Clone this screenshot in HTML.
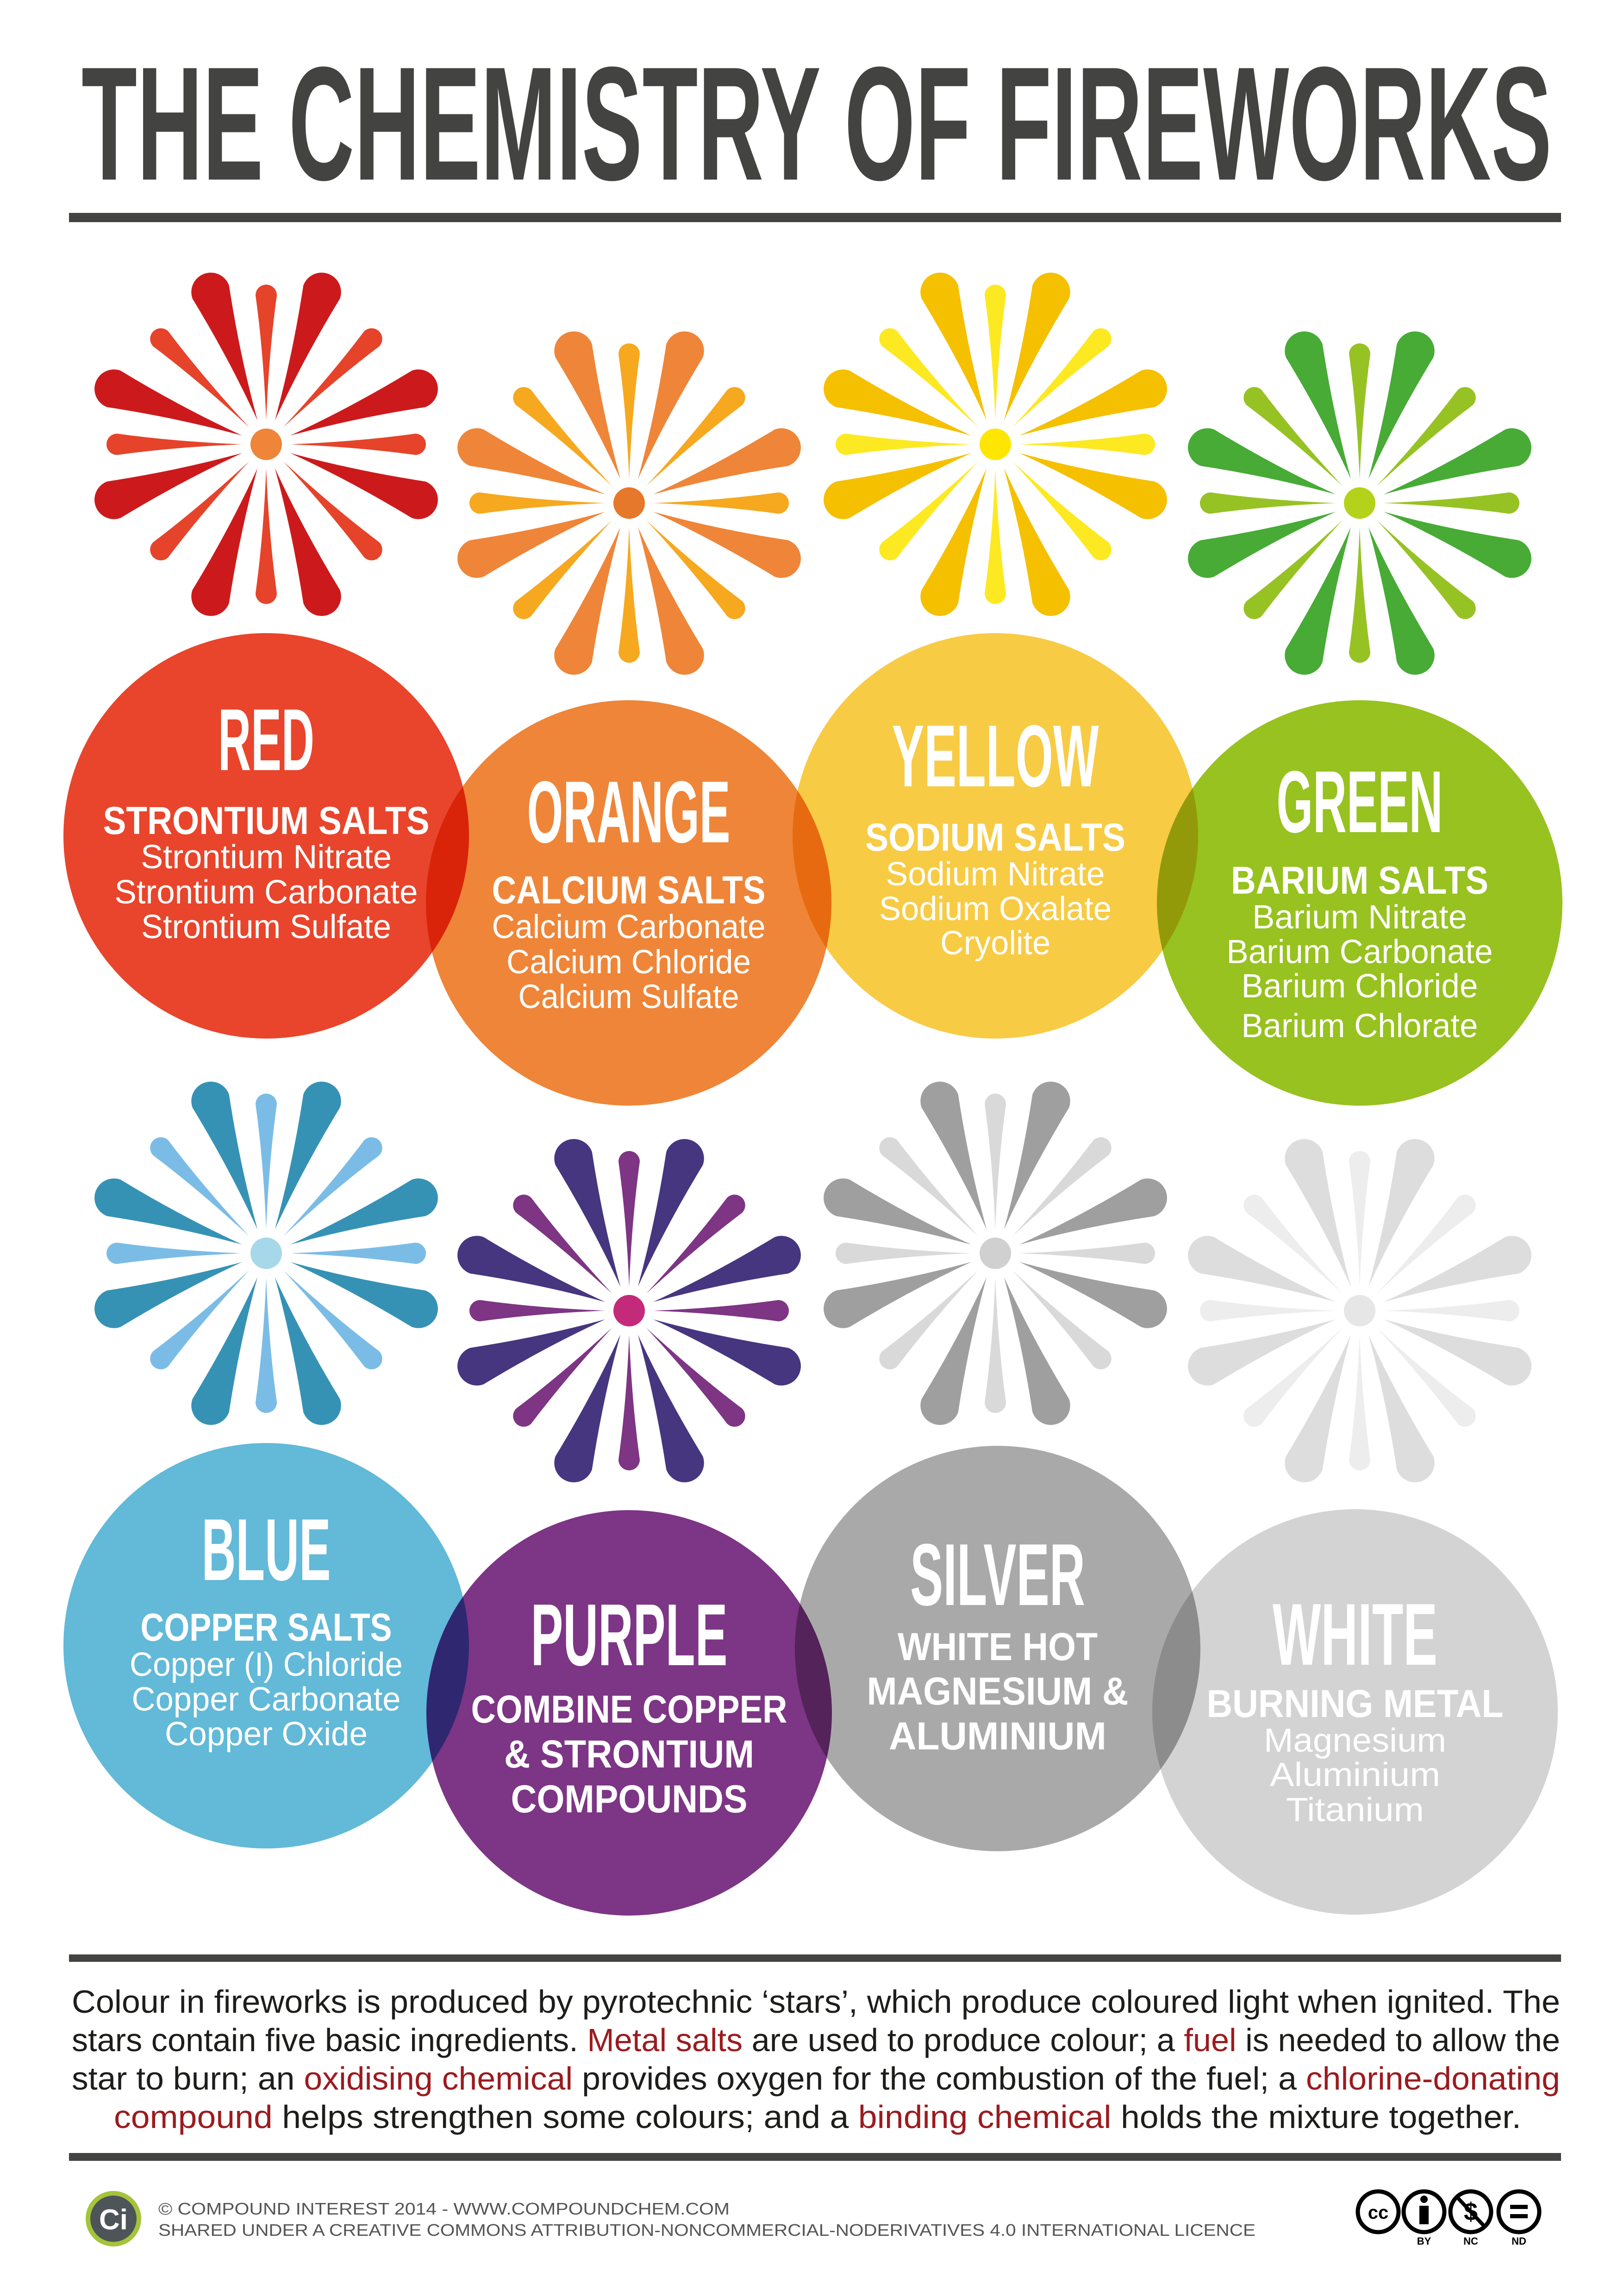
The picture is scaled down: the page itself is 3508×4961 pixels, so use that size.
<!DOCTYPE html>
<html><head><meta charset="utf-8"><style>
html,body{margin:0;padding:0;background:#fff}
svg{display:block}
.h{font-family:"Liberation Sans Narrow","Liberation Sans",sans-serif;font-weight:bold;fill:#fff}
.b{font-family:"Liberation Sans",sans-serif;font-weight:bold;fill:#fff}
.l{font-family:"Liberation Sans Narrow","Liberation Sans",sans-serif;fill:#fff}
</style></head><body>
<svg width="3508" height="4961" viewBox="0 0 3508 4961" xmlns="http://www.w3.org/2000/svg">
<defs>
<path id="d" d="M0,-55 Q-12,-200 -42,-350 A42,42 0 0 1 42,-350 Q12,-200 0,-55Z"/>
<path id="s" d="M0,-52 Q-6,-200 -23,-322 A23,23 0 0 1 23,-322 Q6,-200 0,-52Z"/>
<g id="D"><use href="#d" transform="rotate(20)"/><use href="#d" transform="rotate(-20)"/><use href="#d" transform="rotate(70)"/><use href="#d" transform="rotate(-70)"/><use href="#d" transform="rotate(110)"/><use href="#d" transform="rotate(-110)"/><use href="#d" transform="rotate(160)"/><use href="#d" transform="rotate(-160)"/></g>
<g id="S"><use href="#s"/><use href="#s" transform="rotate(45)"/><use href="#s" transform="rotate(90)"/><use href="#s" transform="rotate(135)"/><use href="#s" transform="rotate(180)"/><use href="#s" transform="rotate(225)"/><use href="#s" transform="rotate(270)"/><use href="#s" transform="rotate(315)"/></g>
</defs>

<text x="176" y="388" textLength="3176" lengthAdjust="spacingAndGlyphs" font-family="Liberation Sans Narrow, Liberation Sans, sans-serif" font-weight="bold" font-size="350" fill="#434341">THE CHEMISTRY OF FIREWORKS</text>
<rect x="149" y="460" width="3223" height="20" fill="#434341"/>

<!-- bursts -->
<g transform="translate(575,960)"><use href="#D" fill="#cc1a1c"/><use href="#S" fill="#e6432b"/><circle r="34" fill="#ef8538"/></g>
<g transform="translate(1359,1087)"><use href="#D" fill="#ef8538"/><use href="#S" fill="#f6a81e"/><circle r="34" fill="#e6782b"/></g>
<g transform="translate(2150,960)"><use href="#D" fill="#f5c000"/><use href="#S" fill="#fce921"/><circle r="34" fill="#ffe600"/></g>
<g transform="translate(2937,1087)"><use href="#D" fill="#47ab36"/><use href="#S" fill="#97c224"/><circle r="34" fill="#b5d21a"/></g>
<g transform="translate(575,2708)"><use href="#D" fill="#3692b5"/><use href="#S" fill="#7bbce6"/><circle r="34" fill="#a6d8ea"/></g>
<g transform="translate(1359,2832)"><use href="#D" fill="#46357f"/><use href="#S" fill="#7d3584"/><circle r="34" fill="#c42a7a"/></g>
<g transform="translate(2150,2708)"><use href="#D" fill="#a09fa0"/><use href="#S" fill="#d9d9d9"/><circle r="34" fill="#d0d0d0"/></g>
<g transform="translate(2937,2832)"><use href="#D" fill="#dddddd"/><use href="#S" fill="#ededed"/><circle r="34" fill="#e6e6e6"/></g>

<!-- circles -->
<g style="isolation:isolate">
<circle cx="575" cy="1806" r="438" fill="#e8452c" style="mix-blend-mode:multiply"/>
<circle cx="1358" cy="1951" r="438" fill="#ef8538" style="mix-blend-mode:multiply"/>
<circle cx="2150" cy="1806" r="438" fill="#f8cb45" style="mix-blend-mode:multiply"/>
<circle cx="2937" cy="1951" r="438" fill="#97c21f" style="mix-blend-mode:multiply"/>
<circle cx="575" cy="3556" r="438" fill="#62b9d8" style="mix-blend-mode:multiply"/>
<circle cx="1359" cy="3701" r="438" fill="#7d3585" style="mix-blend-mode:multiply"/>
<circle cx="2155" cy="3562" r="438" fill="#aaa9aa" style="mix-blend-mode:multiply"/>
<circle cx="2927" cy="3699" r="438" fill="#d4d3d4" style="mix-blend-mode:multiply"/>
</g>

<g text-anchor="middle">
<text class="h" x="575" y="1664" font-size="190" textLength="208" lengthAdjust="spacingAndGlyphs">RED</text>
<text class="b" x="575" y="1802" font-size="84" textLength="705" lengthAdjust="spacingAndGlyphs">STRONTIUM SALTS</text>
<text class="l" x="575" y="1876" font-size="72" textLength="542" lengthAdjust="spacingAndGlyphs">Strontium Nitrate</text>
<text class="l" x="575" y="1952" font-size="72" textLength="655" lengthAdjust="spacingAndGlyphs">Strontium Carbonate</text>
<text class="l" x="575" y="2027" font-size="72" textLength="540" lengthAdjust="spacingAndGlyphs">Strontium Sulfate</text>

<text class="h" x="1358" y="1820" font-size="190" textLength="439" lengthAdjust="spacingAndGlyphs">ORANGE</text>
<text class="b" x="1358" y="1952" font-size="84" textLength="591" lengthAdjust="spacingAndGlyphs">CALCIUM SALTS</text>
<text class="l" x="1358" y="2027" font-size="72" textLength="591" lengthAdjust="spacingAndGlyphs">Calcium Carbonate</text>
<text class="l" x="1358" y="2103" font-size="72" textLength="528" lengthAdjust="spacingAndGlyphs">Calcium Chloride</text>
<text class="l" x="1358" y="2178" font-size="72" textLength="477" lengthAdjust="spacingAndGlyphs">Calcium Sulfate</text>

<text class="h" x="2150" y="1699" font-size="190" textLength="447" lengthAdjust="spacingAndGlyphs">YELLOW</text>
<text class="b" x="2150" y="1838" font-size="84" textLength="562" lengthAdjust="spacingAndGlyphs">SODIUM SALTS</text>
<text class="l" x="2150" y="1913" font-size="72" textLength="473" lengthAdjust="spacingAndGlyphs">Sodium Nitrate</text>
<text class="l" x="2150" y="1988" font-size="72" textLength="502" lengthAdjust="spacingAndGlyphs">Sodium Oxalate</text>
<text class="l" x="2150" y="2062" font-size="72" textLength="238" lengthAdjust="spacingAndGlyphs">Cryolite</text>

<text class="h" x="2937" y="1798" font-size="190" textLength="359" lengthAdjust="spacingAndGlyphs">GREEN</text>
<text class="b" x="2937" y="1931" font-size="84" textLength="556" lengthAdjust="spacingAndGlyphs">BARIUM SALTS</text>
<text class="l" x="2937" y="2006" font-size="72" textLength="464" lengthAdjust="spacingAndGlyphs">Barium Nitrate</text>
<text class="l" x="2937" y="2081" font-size="72" textLength="575" lengthAdjust="spacingAndGlyphs">Barium Carbonate</text>
<text class="l" x="2937" y="2155" font-size="72" textLength="511" lengthAdjust="spacingAndGlyphs">Barium Chloride</text>
<text class="l" x="2937" y="2241" font-size="72" textLength="511" lengthAdjust="spacingAndGlyphs">Barium Chlorate</text>

<text class="h" x="575" y="3414" font-size="190" textLength="279" lengthAdjust="spacingAndGlyphs">BLUE</text>
<text class="b" x="575" y="3545" font-size="84" textLength="543" lengthAdjust="spacingAndGlyphs">COPPER SALTS</text>
<text class="l" x="575" y="3621" font-size="72" textLength="590" lengthAdjust="spacingAndGlyphs">Copper (I) Chloride</text>
<text class="l" x="575" y="3696" font-size="72" textLength="581" lengthAdjust="spacingAndGlyphs">Copper Carbonate</text>
<text class="l" x="575" y="3771" font-size="72" textLength="438" lengthAdjust="spacingAndGlyphs">Copper Oxide</text>

<text class="h" x="1359" y="3598" font-size="190" textLength="425" lengthAdjust="spacingAndGlyphs">PURPLE</text>
<text class="b" x="1359" y="3722" font-size="84" textLength="683" lengthAdjust="spacingAndGlyphs">COMBINE COPPER</text>
<text class="b" x="1359" y="3819" font-size="84" textLength="540" lengthAdjust="spacingAndGlyphs">&amp; STRONTIUM</text>
<text class="b" x="1359" y="3916" font-size="84" textLength="511" lengthAdjust="spacingAndGlyphs">COMPOUNDS</text>

<text class="h" x="2155" y="3468" font-size="190" textLength="378" lengthAdjust="spacingAndGlyphs">SILVER</text>
<text class="b" x="2155" y="3587" font-size="84" textLength="432" lengthAdjust="spacingAndGlyphs">WHITE HOT</text>
<text class="b" x="2155" y="3683" font-size="84" textLength="565" lengthAdjust="spacingAndGlyphs">MAGNESIUM &amp;</text>
<text class="b" x="2155" y="3780" font-size="84" textLength="470" lengthAdjust="spacingAndGlyphs">ALUMINIUM</text>

<text class="h" x="2927" y="3597" font-size="190" textLength="356" lengthAdjust="spacingAndGlyphs">WHITE</text>
<text class="b" x="2927" y="3710" font-size="84" textLength="641" lengthAdjust="spacingAndGlyphs">BURNING METAL</text>
<text class="l" x="2927" y="3785" font-size="72" textLength="394" lengthAdjust="spacingAndGlyphs">Magnesium</text>
<text class="l" x="2927" y="3859" font-size="72" textLength="368" lengthAdjust="spacingAndGlyphs">Aluminium</text>
<text class="l" x="2927" y="3935" font-size="72" textLength="298" lengthAdjust="spacingAndGlyphs">Titanium</text>
</g>

<rect x="149" y="4223" width="3223" height="16" fill="#434341"/>
<g font-family="Liberation Sans Narrow, Liberation Sans, sans-serif" font-size="70" fill="#1d1d1b">
<text x="155" y="4349" textLength="3215" lengthAdjust="spacingAndGlyphs">Colour in fireworks is produced by pyrotechnic ‘stars’, which produce coloured light when ignited. The</text>
<text x="155" y="4432" textLength="3215" lengthAdjust="spacingAndGlyphs">stars contain five basic ingredients. <tspan fill="#9b1b1f">Metal salts</tspan> are used to produce colour; a <tspan fill="#9b1b1f">fuel</tspan> is needed to allow the</text>
<text x="155" y="4515" textLength="3215" lengthAdjust="spacingAndGlyphs">star to burn; an <tspan fill="#9b1b1f">oxidising chemical</tspan> provides oxygen for the combustion of the fuel; a <tspan fill="#9b1b1f">chlorine-donating</tspan></text>
<text x="246" y="4598" textLength="3040" lengthAdjust="spacingAndGlyphs"><tspan fill="#9b1b1f">compound</tspan> helps strengthen some colours; and a <tspan fill="#9b1b1f">binding chemical</tspan> holds the mixture together.</text>
</g>
<rect x="149" y="4652" width="3223" height="17" fill="#434341"/>

<circle cx="245" cy="4794" r="60" fill="#a4c43a"/>
<circle cx="245" cy="4794" r="50" fill="#4d5559"/>
<text x="245" y="4817" text-anchor="middle" font-family="Liberation Sans, sans-serif" font-weight="bold" font-size="62" fill="#fff">Ci</text>
<g font-family="Liberation Sans Narrow, Liberation Sans, sans-serif" font-size="36" fill="#555">
<text x="342" y="4785" textLength="1234" lengthAdjust="spacingAndGlyphs">© COMPOUND INTEREST 2014 - WWW.COMPOUNDCHEM.COM</text>
<text x="342" y="4831" textLength="2370" lengthAdjust="spacingAndGlyphs">SHARED UNDER A CREATIVE COMMONS ATTRIBUTION-NONCOMMERCIAL-NODERIVATIVES 4.0 INTERNATIONAL LICENCE</text>
</g>
<g fill="none" stroke="#000" stroke-width="9">
<circle cx="2977" cy="4779" r="44"/><circle cx="3076" cy="4779" r="44"/><circle cx="3177" cy="4779" r="44"/><circle cx="3281" cy="4779" r="44"/>
</g>
<text x="2977" y="4794" text-anchor="middle" font-family="Liberation Sans, sans-serif" font-weight="bold" font-size="40">cc</text>
<circle cx="3076" cy="4752" r="8" fill="#000"/>
<rect x="3066" y="4766" width="20" height="40" fill="#000"/>
<text x="3177" y="4797" text-anchor="middle" font-family="Liberation Sans, sans-serif" font-weight="bold" font-size="54">$</text>
<line x1="3148" y1="4748" x2="3206" y2="4810" stroke="#000" stroke-width="8"/>
<rect x="3262" y="4764" width="38" height="9" fill="#000"/>
<rect x="3262" y="4784" width="38" height="9" fill="#000"/>
<g font-family="Liberation Sans Narrow, Liberation Sans, sans-serif" font-weight="bold" font-size="22" text-anchor="middle">
<text x="3076" y="4850">BY</text><text x="3177" y="4850">NC</text><text x="3281" y="4850">ND</text>
</g>
</svg>
</body></html>
